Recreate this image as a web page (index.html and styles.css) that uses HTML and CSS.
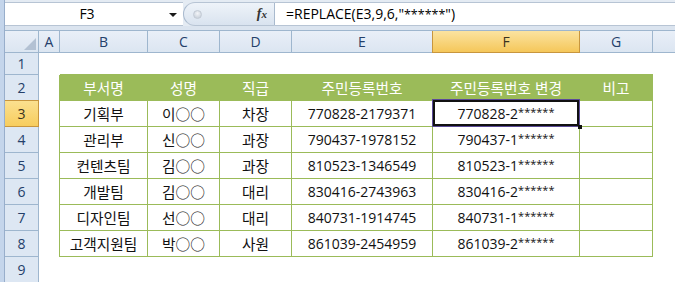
FILE: index.html
```html
<!DOCTYPE html>
<html lang="ko">
<head>
<meta charset="utf-8">
<link rel="stylesheet" href="styles.css">
</head>
<body>
<div class="app">
  <div class="frame"></div>
  <div class="main">
    <div class="fbar">
      <div class="namebox"><span class="name">F3</span><span class="arrow"></span></div>
      <div class="pill"><span class="knob"></span><span class="fx">f<span class="fx-x">x</span></span></div>
      <div class="formula">=REPLACE(E3,9,6,"<span class="fast">******</span>")</div>
    </div>
    <div class="gap"></div>
    <div class="sheet">
      <div class="row colhead">
        <div class="corner"><span class="tri"></span></div>
        <div class="ch">A</div>
        <div class="ch">B</div>
        <div class="ch">C</div>
        <div class="ch">D</div>
        <div class="ch">E</div>
        <div class="ch sel">F</div>
        <div class="ch">G</div>
        <div class="ch last"></div>
      </div>
      <div class="row r1">
        <div class="rh">1</div><div class="c"></div>
        <div class="c top"></div><div class="c top"></div><div class="c top"></div><div class="c top"></div><div class="c top"></div><div class="c top"></div>
        <div class="c"></div>
      </div>
      <div class="row r">
        <div class="rh">2</div><div class="c lead"></div>
        <div class="c t hd">부서명</div><div class="c t hd">성명</div><div class="c t hd">직급</div><div class="c t hd">주민등록번호</div><div class="c t hd">주민등록번호 변경</div><div class="c t hd">비고</div>
        <div class="c"></div>
      </div>
      <div class="row r">
        <div class="rh sel">3</div><div class="c lead"></div>
        <div class="c t">기획부</div><div class="c t">이○○</div><div class="c t">차장</div><div class="c t num">770828-2179371</div><div class="c t num cur">770828-2<span class="ast">******</span></div><div class="c t"></div>
        <div class="c"></div>
      </div>
      <div class="row r">
        <div class="rh">4</div><div class="c lead"></div>
        <div class="c t">관리부</div><div class="c t">신○○</div><div class="c t">과장</div><div class="c t num">790437-1978152</div><div class="c t num">790437-1<span class="ast">******</span></div><div class="c t"></div>
        <div class="c"></div>
      </div>
      <div class="row r">
        <div class="rh">5</div><div class="c lead"></div>
        <div class="c t">컨텐츠팀</div><div class="c t">김○○</div><div class="c t">과장</div><div class="c t num">810523-1346549</div><div class="c t num">810523-1<span class="ast">******</span></div><div class="c t"></div>
        <div class="c"></div>
      </div>
      <div class="row r">
        <div class="rh">6</div><div class="c lead"></div>
        <div class="c t">개발팀</div><div class="c t">김○○</div><div class="c t">대리</div><div class="c t num">830416-2743963</div><div class="c t num">830416-2<span class="ast">******</span></div><div class="c t"></div>
        <div class="c"></div>
      </div>
      <div class="row r">
        <div class="rh">7</div><div class="c lead"></div>
        <div class="c t">디자인팀</div><div class="c t">선○○</div><div class="c t">대리</div><div class="c t num">840731-1914745</div><div class="c t num">840731-1<span class="ast">******</span></div><div class="c t"></div>
        <div class="c"></div>
      </div>
      <div class="row r">
        <div class="rh">8</div><div class="c lead"></div>
        <div class="c t">고객지원팀</div><div class="c t">박○○</div><div class="c t">사원</div><div class="c t num">861039-2454959</div><div class="c t num">861039-2<span class="ast">******</span></div><div class="c t"></div>
        <div class="c"></div>
      </div>
      <div class="row r">
        <div class="rh">9</div><div class="c"></div>
        <div class="c"></div><div class="c"></div><div class="c"></div><div class="c"></div><div class="c"></div><div class="c"></div>
        <div class="c"></div>
      </div>
    </div>
  </div>
</div>
</body>
</html>
```
FILE: styles.css
```css
html, body {
  margin: 0;
  padding: 0;
}
body {
  width: 675px;
  height: 282px;
  overflow: hidden;
  background: #fff;
  font-family: "Open Sans", "Noto Sans CJK KR", sans-serif;
  font-size: 14px;
  color: #000;
}
.app {
  display: flex;
  height: 282px;
}
.frame {
  flex: none;
  width: 4px;
  background: #c4d5eb;
  border-right: 1px solid #98aecb;
}
.main {
  flex: 1;
  min-width: 0;
  display: flex;
  flex-direction: column;
}

/* formula bar */
.fbar {
  flex: none;
  height: 26px;
  box-sizing: border-box;
  padding-top: 2px;
  display: flex;
  background: #e4ebf3;
}
.fbar > div {
  box-sizing: border-box;
  height: 24px;
  border-top: 1px solid #b7c4d4;
  border-bottom: 1px solid #b7c4d4;
}
.namebox {
  flex: none;
  width: 178px;
  background: #fff;
  display: flex;
  align-items: center;
}
.name {
  flex: 1;
  text-align: center;
  color: #000;
  line-height: 20px;
}
.arrow {
  width: 0;
  height: 0;
  border-left: 4px solid transparent;
  border-right: 4px solid transparent;
  border-top: 4px solid #1a1a1a;
  margin-right: 6px;
  margin-top: 1px;
}
.pill {
  flex: none;
  width: 92px;
  display: flex;
  align-items: center;
  justify-content: space-between;
  padding: 0 7px 0 9px;
  box-sizing: border-box;
  background: linear-gradient(#eef3f9, #d9e3ef);
  border-left: 1px solid #a9bace;
  border-right: 1px solid #a9bace;
  border-radius: 12px 0 0 12px;
}
.knob {
  width: 9px;
  height: 9px;
  border-radius: 50%;
  background: radial-gradient(circle at 50% 35%, #f3f5f8 0, #cfd6df 70%);
  border: 1px solid #c2cad4;
  box-sizing: border-box;
}
.fx {
  font-family: "Liberation Serif", serif;
  font-style: italic;
  font-weight: bold;
  font-size: 14px;
  color: #333;
  line-height: 20px;
}
.fx-x {
  font-size: 11px;
}
.formula {
  flex: 1;
  background: #fff;
  padding-left: 11px;
  line-height: 21px;
  white-space: nowrap;
  overflow: hidden;
}
.fast {
  font-size: 12.5px;
}
.gap {
  flex: none;
  height: 4px;
  background: #dbe4ef;
}

/* sheet */
.sheet {
  flex: 1;
  overflow: hidden;
}
.row {
  display: grid;
  grid-template-columns: 34px 21px 88px 72px 72px 141px 147px 73px 1fr;
}
.colhead {
  height: 23px;
  box-sizing: border-box;
  border-top: 1px solid #9eb6ce;
  background: linear-gradient(#e9eff8, #dbe5f1);
}
.corner {
  box-sizing: border-box;
  border-right: 1px solid #9eb6ce;
  border-bottom: 1px solid #9eb6ce;
  display: flex;
  align-items: flex-end;
  justify-content: flex-end;
  padding: 0 2px 2px 0;
}
.tri {
  width: 0;
  height: 0;
  border-left: 12px solid transparent;
  border-bottom: 12px solid #b3c1d3;
}
.ch {
  box-sizing: border-box;
  border-right: 1px solid #9eb6ce;
  border-bottom: 1px solid #9eb6ce;
  text-align: center;
  line-height: 21px;
  color: #24406a;
}
.ch.last {
  border-right: none;
}
.ch.sel {
  background: linear-gradient(#fbe3a0, #f5c75a);
  border-color: #c8963e;
  box-shadow: -1px 0 0 #c8963e;
  color: #3a3320;
}
.r1 {
  height: 22px;
}
.r {
  height: 26px;
}
.rh {
  box-sizing: border-box;
  background: #dde7f3;
  border-right: 1px solid #9eb6ce;
  border-bottom: 1px solid #9eb6ce;
  display: flex;
  align-items: center;
  justify-content: center;
  color: #24406a;
}
.rh.sel {
  background: linear-gradient(#fbe08f, #f7cd5e);
  border-color: #c8963e;
  box-shadow: 0 -1px 0 #c8963e;
  color: #3a3320;
}
.c {
  box-sizing: border-box;
  display: flex;
  align-items: center;
  justify-content: center;
  white-space: nowrap;
  font-size: 14.7px;
  color: #111;
}
.c.num {
  font-size: 14px;
}
.ast {
  font-size: 11px;
  padding-bottom: 5px;
}
.lead {
  border-right: 1px solid #9bbb59;
}
.top {
  border-bottom: 1px solid #9bbb59;
}
.t {
  border-right: 1px solid #9bbb59;
  border-bottom: 1px solid #9bbb59;
}
.hd {
  background: #9bbb59;
  color: #fff;
}
.cur {
  position: relative;
}
.cur::after {
  content: "";
  position: absolute;
  left: 0;
  right: 0;
  top: -1px;
  bottom: 0;
  border: 2px solid #111;
  box-shadow: 0 0 0 1px #5b4b98;
  z-index: 2;
}
.cur::before {
  content: "";
  position: absolute;
  right: -3px;
  bottom: -3px;
  width: 4px;
  height: 4px;
  background: #111;
  z-index: 3;
}
```
